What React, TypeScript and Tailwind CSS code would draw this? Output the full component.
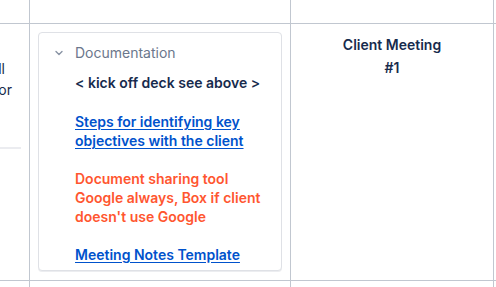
export default function App() {
  return (
    <div className="h-[287px] w-[496px] overflow-hidden bg-white font-['Inter',sans-serif] text-[14px] text-[#172b4d]">
      {/* header row */}
      <div className="flex h-[24px] border-b border-[#c1c7d0]">
        <div className="w-[30px] shrink-0 border-r border-[#c1c7d0]" />
        <div className="w-[261px] shrink-0 border-r border-[#c1c7d0]" />
        <div className="w-[203px] shrink-0 border-r border-[#c1c7d0]" />
      </div>

      {/* body row */}
      <div className="flex h-[257px] border-b border-[#c1c7d0]">
        <div className="relative w-[30px] shrink-0 overflow-hidden border-r border-[#c1c7d0]">
          <div className="flex flex-col items-end pt-[34px] leading-[21px]">
            <span className="mr-[24px] whitespace-nowrap">The kickoff deck will</span>
            <span className="mr-[17px] whitespace-nowrap">serve as the agenda for</span>
          </div>
          <div className="mt-[47px] h-[2px] w-[21px] bg-[#ebecf0]" />
        </div>

        <div className="w-[261px] shrink-0 border-r border-[#c1c7d0] p-[8px] pr-[8px]">
          <div className="h-[239px] rounded-[4px] border border-[#dfe1e6] bg-white pl-[12px] pt-[11px] shadow-[0_1px_0_rgba(9,30,66,0.08)]">
            <div className="flex h-[18px] items-center gap-[8px] text-[#6b778c]">
              <svg width="16" height="16" viewBox="0 0 16 16" fill="none">
                <path d="M5 6.5l3 3 3-3" stroke="#8993a4" strokeWidth="1.4" strokeLinecap="round" strokeLinejoin="round" />
              </svg>
              <span className="leading-[18px]">Documentation</span>
            </div>
            <div className="mt-[11px] pl-[24px] leading-[19px]">
              <p className="whitespace-nowrap font-semibold">&lt; kick off deck see above &gt;</p>
              <p className="mt-[20px] whitespace-nowrap font-semibold text-[#0052cc] underline underline-offset-2">
                Steps for identifying key <br />
                objectives with the client
              </p>
              <p className="mt-[19px] whitespace-nowrap font-semibold text-[#ff5630]">
                Document sharing tool
                <br />
                Google always, Box if client
                <br />
                doesn't use Google
              </p>
              <p className="mt-[19px] whitespace-nowrap font-semibold text-[#0052cc] underline underline-offset-2">
                Meeting Notes Template
              </p>
            </div>
          </div>
        </div>

        <div className="w-[203px] shrink-0 border-r border-[#c1c7d0] pt-[9px] text-center font-semibold leading-[23px]">
          Client Meeting
          <br />
          #1
        </div>
      </div>

      {/* next row */}
      <div className="flex h-[10px]">
        <div className="w-[30px] shrink-0 border-r border-[#c1c7d0]" />
        <div className="w-[261px] shrink-0 border-r border-[#c1c7d0]" />
        <div className="w-[203px] shrink-0 border-r border-[#c1c7d0]" />
      </div>
    </div>
  );
}
